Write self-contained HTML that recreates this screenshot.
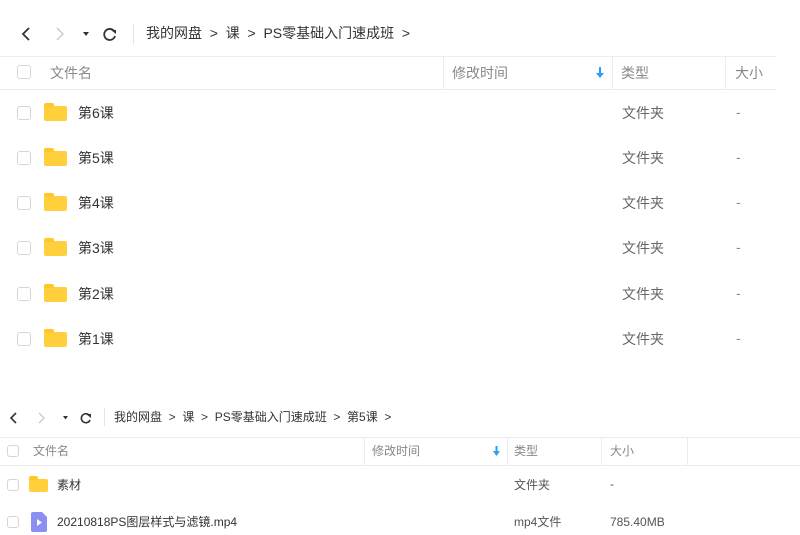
<!DOCTYPE html>
<html><head><meta charset="utf-8"><style>
*{margin:0;padding:0;box-sizing:border-box}
body{width:800px;height:535px;background:#fff;position:relative;overflow:hidden;font-family:"Liberation Sans","Noto Sans CJK SC",sans-serif;color:#333}
.a{position:absolute;white-space:nowrap}
.cb{position:absolute;border:1px solid #d6d6d6;border-radius:3px;background:#fff}
.fd{position:absolute;background:#ffd03b;border-radius:2px}
.fd:before{content:"";position:absolute;left:0;top:-3px;width:45%;height:4px;background:#ffc72a;border-radius:2px 2px 0 0}
.hl{position:absolute;height:1px;background:#ececec}
.vl{position:absolute;width:1px;background:#ececec}
.g{color:#888}
</style></head><body>
<svg class="a" style="left:18px;top:25px" width="110" height="18" viewBox="0 0 110 18">
<path d="M11 3 L5 9 L11 15" fill="none" stroke="#333" stroke-width="1.8"/>
<path d="M39 3 L45 9 L39 15" fill="none" stroke="#ccc" stroke-width="1.5"/>
<path d="M65 7 L71 7 L68 11 Z" fill="#333"/>
<path d="M96 6 A5.5 5.5 0 1 0 97 11" fill="none" stroke="#333" stroke-width="1.8"/>
<path d="M93 5 L98 5 L98 9 Z" fill="#333"/>
</svg>
<div class="vl" style="left:133px;top:24px;height:20px;background:#e4e4e4"></div>
<div class="a" style="left:146px;top:24px;font-size:14px;line-height:18px;color:#333">我的网盘&nbsp;&nbsp;&gt;&nbsp;&nbsp;课&nbsp;&nbsp;&gt;&nbsp;&nbsp;PS零基础入门速成班&nbsp;&nbsp;&gt;</div>
<div class="hl" style="left:0;top:56px;width:776px"></div>
<div class="hl" style="left:0;top:89px;width:776px"></div>
<div class="vl" style="left:443px;top:56px;height:33px"></div>
<div class="vl" style="left:612px;top:56px;height:33px"></div>
<div class="vl" style="left:725px;top:56px;height:33px"></div>
<div class="cb" style="left:17px;top:65px;width:14px;height:14px"></div>
<div class="a g" style="left:50px;top:64px;font-size:14px;line-height:18px">文件名</div>
<div class="a g" style="left:452px;top:64px;font-size:14px;line-height:18px">修改时间</div>
<svg class="a" style="left:596px;top:67px" width="8" height="11" viewBox="0 0 8 11"><path d="M4 0 V7" stroke="#2b9ff5" stroke-width="2"/><path d="M0 6 H8 L4 11Z" fill="#2b9ff5"/></svg>
<div class="a g" style="left:621px;top:64px;font-size:14px;line-height:18px">类型</div>
<div class="a g" style="left:735px;top:64px;font-size:14px;line-height:18px">大小</div>
<div class="cb" style="left:17px;top:106px;width:14px;height:14px"></div><div class="fd" style="left:44px;top:106px;width:23px;height:15px"></div><div class="a" style="left:78px;top:104px;font-size:14px;line-height:18px">第6课</div><div class="a g" style="left:622px;top:104px;font-size:14px;line-height:18px;color:#666">文件夹</div><div class="a g" style="left:736px;top:104px;font-size:14px">-</div>
<div class="cb" style="left:17px;top:151px;width:14px;height:14px"></div><div class="fd" style="left:44px;top:151px;width:23px;height:15px"></div><div class="a" style="left:78px;top:149px;font-size:14px;line-height:18px">第5课</div><div class="a g" style="left:622px;top:149px;font-size:14px;line-height:18px;color:#666">文件夹</div><div class="a g" style="left:736px;top:149px;font-size:14px">-</div>
<div class="cb" style="left:17px;top:196px;width:14px;height:14px"></div><div class="fd" style="left:44px;top:196px;width:23px;height:15px"></div><div class="a" style="left:78px;top:194px;font-size:14px;line-height:18px">第4课</div><div class="a g" style="left:622px;top:194px;font-size:14px;line-height:18px;color:#666">文件夹</div><div class="a g" style="left:736px;top:194px;font-size:14px">-</div>
<div class="cb" style="left:17px;top:241px;width:14px;height:14px"></div><div class="fd" style="left:44px;top:241px;width:23px;height:15px"></div><div class="a" style="left:78px;top:239px;font-size:14px;line-height:18px">第3课</div><div class="a g" style="left:622px;top:239px;font-size:14px;line-height:18px;color:#666">文件夹</div><div class="a g" style="left:736px;top:239px;font-size:14px">-</div>
<div class="cb" style="left:17px;top:287px;width:14px;height:14px"></div><div class="fd" style="left:44px;top:287px;width:23px;height:15px"></div><div class="a" style="left:78px;top:285px;font-size:14px;line-height:18px">第2课</div><div class="a g" style="left:622px;top:285px;font-size:14px;line-height:18px;color:#666">文件夹</div><div class="a g" style="left:736px;top:285px;font-size:14px">-</div>
<div class="cb" style="left:17px;top:332px;width:14px;height:14px"></div><div class="fd" style="left:44px;top:332px;width:23px;height:15px"></div><div class="a" style="left:78px;top:330px;font-size:14px;line-height:18px">第1课</div><div class="a g" style="left:622px;top:330px;font-size:14px;line-height:18px;color:#666">文件夹</div><div class="a g" style="left:736px;top:330px;font-size:14px">-</div>
<svg class="a" style="left:6px;top:410px" width="90" height="16" viewBox="0 0 90 16">
<path d="M10 3 L5 8 L10 13" fill="none" stroke="#333" stroke-width="1.6"/>
<path d="M33 3 L38 8 L33 13" fill="none" stroke="#ccc" stroke-width="1.4"/>
<path d="M57 6 L62 6 L59.5 9.5 Z" fill="#333"/>
<path d="M83 5 A4.5 4.5 0 1 0 84 10" fill="none" stroke="#333" stroke-width="1.6"/>
<path d="M80 4 L85 4 L85 8 Z" fill="#333"/>
</svg>
<div class="vl" style="left:104px;top:408px;height:18px;background:#e4e4e4"></div>
<div class="a" style="left:114px;top:409px;font-size:12px;line-height:16px">我的网盘&nbsp;&nbsp;&gt;&nbsp;&nbsp;课&nbsp;&nbsp;&gt;&nbsp;&nbsp;PS零基础入门速成班&nbsp;&nbsp;&gt;&nbsp;&nbsp;第5课&nbsp;&nbsp;&gt;</div>
<div class="hl" style="left:0;top:437px;width:800px"></div>
<div class="hl" style="left:0;top:465px;width:800px"></div>
<div class="vl" style="left:364px;top:437px;height:28px"></div>
<div class="vl" style="left:507px;top:437px;height:28px"></div>
<div class="vl" style="left:601px;top:437px;height:28px"></div>
<div class="vl" style="left:687px;top:437px;height:28px"></div>
<div class="cb" style="left:7px;top:445px;width:12px;height:12px"></div>
<div class="a g" style="left:33px;top:443px;font-size:12px;line-height:16px">文件名</div>
<div class="a g" style="left:372px;top:443px;font-size:12px;line-height:16px">修改时间</div>
<svg class="a" style="left:493px;top:446px" width="7" height="10" viewBox="0 0 7 10"><path d="M3.5 0 V6" stroke="#2b9ff5" stroke-width="2"/><path d="M0 5 H7 L3.5 10Z" fill="#2b9ff5"/></svg>
<div class="a g" style="left:514px;top:443px;font-size:12px;line-height:16px">类型</div>
<div class="a g" style="left:610px;top:443px;font-size:12px;line-height:16px">大小</div>
<div class="cb" style="left:7px;top:479px;width:12px;height:12px"></div><div class="fd" style="left:29px;top:479px;width:19px;height:13px"></div><div class="a" style="left:57px;top:477px;font-size:12px;line-height:16px">素材</div><div class="a" style="left:514px;top:477px;font-size:12px;line-height:16px;color:#555">文件夹</div><div class="a" style="left:610px;top:477px;font-size:12px;color:#555">-</div>
<div class="cb" style="left:7px;top:516px;width:12px;height:12px"></div>
<svg class="a" style="left:31px;top:512px" width="16" height="20" viewBox="0 0 16 20"><path d="M2 0 H11 L16 5 V18 Q16 20 14 20 H2 Q0 20 0 18 V2 Q0 0 2 0Z" fill="#8b8ef2"/><path d="M6 7 L11 10.5 L6 14Z" fill="#fff"/></svg>
<div class="a" style="left:57px;top:514px;font-size:12px;line-height:16px">20210818PS图层样式与滤镜.mp4</div><div class="a" style="left:514px;top:514px;font-size:12px;line-height:16px;color:#555">mp4文件</div><div class="a" style="left:610px;top:514px;font-size:12px;line-height:16px;color:#555">785.40MB</div>
</body></html>
